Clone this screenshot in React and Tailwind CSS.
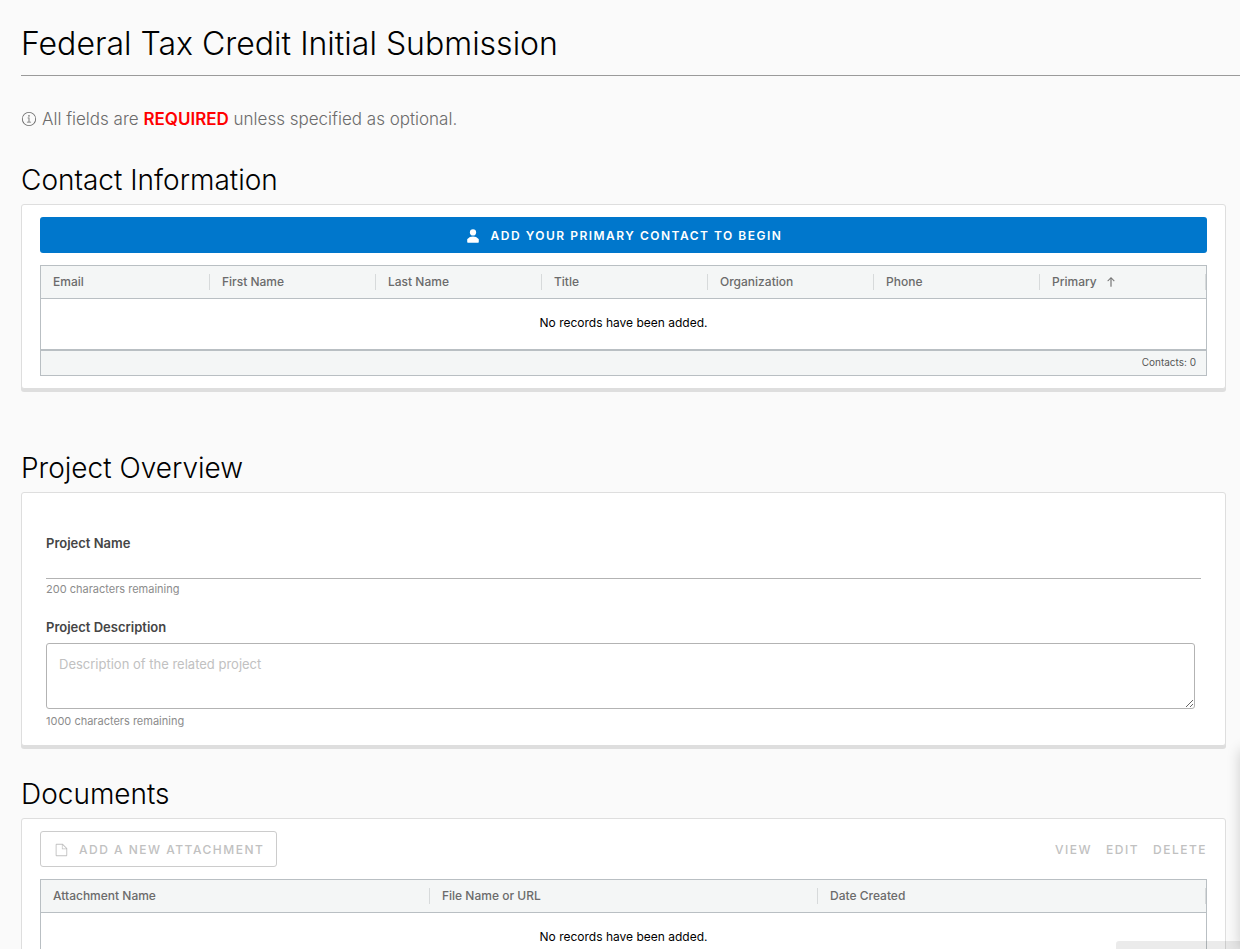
import React from "react";

const contactColumns = ["Email", "First Name", "Last Name", "Title", "Organization", "Phone", "Primary"];
const documentColumns = ["Attachment Name", "File Name or URL", "Date Created"];

function InfoIcon() {
  return (
    <svg className="size-4 shrink-0" viewBox="0 0 36 36" fill="currentColor" aria-hidden="true">
      <circle cx="17.93" cy="11" r="1.8" />
      <path d="M22 24h-3v-9.500h-3.500a1 1 0 0 0 0 2H17V24h-3a1 1 0 1 0 0 2h8a1 1 0 0 0 0-2Z" />
      <path d="M18 2a16 16 0 1 0 16 16A16 16 0 0 0 18 2Zm0 30a14 14 0 1 1 14-14 14 14 0 0 1-14 14Z" />
    </svg>
  );
}

function UserIcon() {
  return (
    <svg className="size-4 shrink-0" viewBox="0 0 36 36" fill="currentColor" aria-hidden="true">
      <path d="M30.61 24.52a17.16 17.16 0 0 0-25.22 0 1.51 1.51 0 0 0-.39 1v6A1.5 1.5 0 0 0 6.5 33h23a1.500 1.500 0 0 0 1.500-1.500v-6a1.510 1.510 0 0 0-.39-.98Z" />
      <circle cx="18" cy="10" r="7" />
    </svg>
  );
}

function FileIcon() {
  return (
    <svg className="size-4 shrink-0" viewBox="0 0 36 36" fill="currentColor" aria-hidden="true">
      <path d="M21.890 4H7.830A1.880 1.880 0 0 0 6 5.910v24.180A1.880 1.880 0 0 0 7.830 32h22.340A1.880 1.880 0 0 0 32 30.090V14.110Zm-.3 2.490 8.100 8.110h-8.100ZM8 30V6h12v10.200h10V30Z" />
    </svg>
  );
}

function SortIcon() {
  return (
    <svg className="size-3 shrink-0" viewBox="0 0 36 36" fill="currentColor" aria-label="Sorted ascending">
      <path d="M27.660 13.610 18 4l-9.660 9.610a1 1 0 1 0 1.410 1.420L17 7.810V30.940a1 1 0 1 0 2 0V7.810l7.250 7.220a1 1 0 0 0 1.410-1.420Z" stroke="currentColor" strokeWidth="1" />
    </svg>
  );
}

function Card({ children, className = "" }) {
  return (
    <div className={`mr-[14px] rounded-[3px] border border-[#dedede] bg-white shadow-[0_3px_0_0_#dedede] ${className}`}>
      {children}
    </div>
  );
}

function SectionTitle({ children }) {
  return <h2 className="text-[28px] leading-8 font-light text-black">{children}</h2>;
}

function DataGrid({ label, columns, sorted, firstWidth, footer }) {
  return (
    <table
      aria-label={label}
      className="mt-3 w-full table-fixed border-separate border-spacing-0 border border-[#b9bfc3] text-xs"
    >
      <thead>
        <tr>
          {columns.map((name, i) => (
            <th
              key={name}
              scope="col"
              className={`border-b border-[#b9bfc3] bg-[#f4f6f6] px-0 py-2 text-left font-medium text-[#6b6b6b] ${i === 0 ? firstWidth : ""}`}
            >
              <div className="flex h-4 items-center gap-2 border-r border-[#d7dadb] pl-3">
                {name}
                {sorted === name && <SortIcon />}
              </div>
            </th>
          ))}
        </tr>
      </thead>
      <tbody>
        <tr>
          <td colSpan={columns.length} className="h-[50px] pb-[2px] text-center text-black">
            No records have been added.
          </td>
        </tr>
      </tbody>
      {footer && (
        <tfoot>
          <tr>
            <td
              colSpan={columns.length}
              className="h-[26px] border-t-2 border-[#b9bfc3] bg-[#f4f6f6] pr-[10px] text-right text-[10px] text-[#565656]"
            >
              {footer}
            </td>
          </tr>
        </tfoot>
      )}
    </table>
  );
}

export default function App() {
  return (
    <div className="h-screen overflow-y-auto bg-[#fafafa] font-['Inter','Noto_Sans',sans-serif] [scrollbar-width:none]">
      <main className="pb-16 pl-[21px]">
        <h1 className="pt-6 text-[32px] leading-10 font-light text-black">Federal Tax Credit Initial Submission</h1>
        <hr className="mt-[11px] border-t border-[#9a9a9a]" />

        <p className="mt-[31px] flex items-center gap-[5px] text-[17px] leading-6 text-[#6b6b6b]">
          <InfoIcon />
          <span className="font-light">
            All fields are <strong className="font-semibold text-[#ff0000]">REQUIRED</strong> unless specified as
            optional.
          </span>
        </p>

        <section className="mt-[33px]">
          <SectionTitle>Contact Information</SectionTitle>
          <Card className="mt-2 px-[18px] py-3">
            <button
              type="button"
              className="flex h-9 w-full items-center justify-center gap-[10px] rounded-[3px] bg-[#0077cc] pt-px text-xs font-semibold tracking-[1.5px] text-white"
            >
              <UserIcon />
              ADD YOUR PRIMARY CONTACT TO BEGIN
            </button>
            <DataGrid
              label="Contacts"
              columns={contactColumns}
              sorted="Primary"
              firstWidth="w-[169px]"
              footer="Contacts: 0"
            />
          </Card>
        </section>

        <section className="mt-[63px]">
          <SectionTitle>Project Overview</SectionTitle>
          <Card className="mt-2 px-6 pt-[42px] pb-4">
            <label htmlFor="project-name" className="block text-[13px] leading-4 font-semibold text-[#454545]">
              Project Name
            </label>
            <input
              id="project-name"
              type="text"
              maxLength={200}
              className="mt-1 block h-6 w-full border-b border-[#b3b3b3] bg-transparent text-[13px] outline-none"
            />
            <p className="mt-[2px] text-[11px] leading-4 text-[#8c8c8c]">200 characters remaining</p>

            <label
              htmlFor="project-description"
              className="mt-[22px] block text-[13px] leading-4 font-semibold text-[#454545]"
            >
              Project Description
            </label>
            <div className="mt-2 pr-[6px]">
              <textarea
                id="project-description"
                maxLength={1000}
                placeholder="Description of the related project"
                className="block h-[66px] w-full resize rounded-[3px] border border-[#b3b3b3] bg-white px-3 py-[11px] text-[13px] leading-[18px] outline-none placeholder:text-[#c1c1c1]"
              />
            </div>
            <p className="mt-1 text-[11px] leading-4 text-[#8c8c8c]">1000 characters remaining</p>
          </Card>
        </section>

        <section className="mt-8">
          <SectionTitle>Documents</SectionTitle>
          <Card className="mt-2 px-[18px] py-3">
            <div className="flex items-center justify-between">
              <button
                type="button"
                disabled
                className="flex h-9 items-center gap-[10px] rounded-[3px] border border-[#cccccc] px-3 pt-px text-xs font-medium tracking-[1.5px] text-[#c1c1c1]"
              >
                <FileIcon />
                ADD A NEW ATTACHMENT
              </button>
              <div className="flex gap-[14px] pt-px text-xs font-medium text-[#c1c1c1]">
                <button type="button" disabled className="tracking-[1.5px]">VIEW</button>
                <button type="button" disabled className="tracking-[1.5px]">EDIT</button>
                <button type="button" disabled className="tracking-[1.5px]">DELETE</button>
              </div>
            </div>
            <DataGrid label="Documents" columns={documentColumns} firstWidth="w-[389px]" />
          </Card>
        </section>
      </main>

      <div className="fixed top-[750px] bottom-0 left-full w-10 shadow-[0_0_14px_rgba(0,0,0,0.18)]" />
      <div className="fixed right-0 bottom-0 h-2 w-[124px] rounded-tl-[3px] bg-black/8" />
    </div>
  );
}
